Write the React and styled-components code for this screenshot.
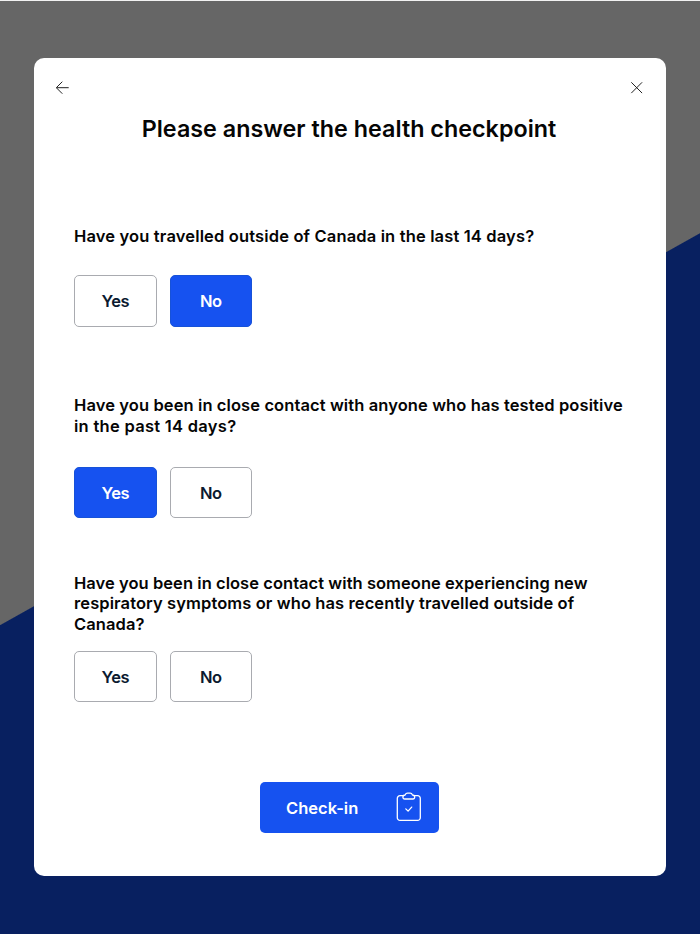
import React, { useState } from "react";
import styled, { createGlobalStyle } from "styled-components";

const GlobalStyle = createGlobalStyle`
    body {
        margin: 0;
    }

    *,
    *::before {
        box-sizing: border-box;
    }
`;

const Page = styled.div`
    height: 934px;
    width: 700px;
    overflow: hidden;
    padding: 57px 34px 0;
    border-top: 1px solid #f2f2f2;
    background: linear-gradient(150.75deg, #666 545px, #082060 546px) 0 -1px / 700px 934px no-repeat;
    font-family: "Inter", "Liberation Sans", sans-serif;
`;

const Card = styled.main`
    display: flex;
    flex-direction: column;
    width: 632px;
    height: 818px;
    padding: 22px 22px 0;
    border-radius: 10px;
    background-color: #fff;
    color: #050505;
`;

const TopBar = styled.header`
    display: flex;
    justify-content: space-between;
`;

const IconButton = styled.button`
    display: flex;
    padding: 0;
    border: none;
    background: none;
    cursor: pointer;
`;

const Title = styled.h1`
    margin: 17px 0 0;
    padding-right: 2px;
    font-size: 23.3px;
    font-weight: 600;
    line-height: 32px;
    letter-spacing: 0.02px;
    text-align: center;
    white-space: nowrap;
`;

const Questions = styled.div`
    padding: 81px 0 0 18px;
`;

const Question = styled.section`
    height: ${(props) => props.$height}px;
`;

const Prompt = styled.h2`
    margin: 0;
    height: ${(props) => props.$height}px;
    font-size: 16.5px;
    font-weight: 600;
    line-height: 20.5px;
`;

const Line = styled.span`
    display: block;
    white-space: nowrap;
    letter-spacing: ${(props) => props.$spacing || 0}px;
`;

const Answers = styled.div`
    display: flex;
    gap: 13px;
`;

const Answer = styled.button`
    width: 82.5px;
    height: 51.5px;
    padding: 1px 0 0;
    border: 1px solid ${(props) => (props.$selected ? "#1752d8" : "#a9abb0")};
    border-radius: 5px;
    background-color: ${(props) => (props.$selected ? "#1652f0" : "#fff")};
    color: ${(props) => (props.$selected ? "#fff" : "#0b1a30")};
    font: 600 16.5px "Inter", "Liberation Sans", sans-serif;
    letter-spacing: -0.5px;
    cursor: pointer;
`;

const CheckIn = styled.button`
    display: flex;
    align-items: center;
    justify-content: space-between;
    align-self: center;
    width: 179px;
    height: 51px;
    margin-right: 1px;
    padding: 0 17px 0 26px;
    border: none;
    border-radius: 5px;
    background-color: #1652f0;
    color: #fff;
    font: 600 16.5px "Inter", "Liberation Sans", sans-serif;
    cursor: pointer;
`;

const Label = styled.span`
    padding-top: 2px;
`;

const ArrowIcon = () => (
    <svg width="14" height="16" viewBox="0 0 14 16" fill="none" stroke="#222" strokeWidth="1">
        <path d="M12.700 7.700H.500M6.300 1.700l-6 6 6 6" />
    </svg>
);

const CloseIcon = () => (
    <svg width="14" height="16" viewBox="0 0 14 16" fill="none" stroke="#222" strokeWidth="1">
        <path d="M1.300 2.300l10.800 10.800M12.100 2.300L1.300 13.100" />
    </svg>
);

const ClipboardIcon = () => (
    <svg width="26" height="30" viewBox="0 0 26 30" fill="none" stroke="#fff" strokeWidth="1.3" strokeLinecap="round" strokeLinejoin="round">
        <path d="M7 3.700H4a2.700 2.700 0 0 0-2.700 2.700v19.300a2.700 2.700 0 0 0 2.700 2.700h17.600a2.700 2.700 0 0 0 2.700-2.700V6.400a2.700 2.700 0 0 0-2.700-2.700h-3" />
        <path d="M8.700 7h8.200c1.100 0 1.800-.8 1.800-1.900 0-1.300-.9-2-2.200-2.100C16 1.800 15.200 1.200 14.100 1.200h-2.600c-1.100 0-1.900.6-2.400 1.800-1.300.1-2.200.8-2.200 2.100C6.900 6.200 7.600 7 8.700 7z" />
        <path d="M9.800 16.900l2.300 2.200 3.600-4" />
    </svg>
);

const questions = [
    {
        id: "travel",
        height: 169,
        promptHeight: 49,
        lines: [["Have you travelled outside of Canada in the last 14 days?", 0.15]],
    },
    {
        id: "contact",
        height: 177.5,
        promptHeight: 71.5,
        lines: [
            ["Have you been in close contact with anyone who has tested positive", 0.1],
            ["in the past 14 days?", 0.28],
        ],
    },
    {
        id: "symptoms",
        height: 209,
        promptHeight: 78,
        lines: [
            ["Have you been in close contact with someone experiencing new", 0.05],
            ["respiratory symptoms or who has recently travelled outside of", 0.1],
            ["Canada?", 0.1],
        ],
    },
];

const App = () => {
    const [answers, setAnswers] = useState({ travel: "No", contact: "Yes" });

    return (
        <>
            <GlobalStyle />
            <Page>
                <Card>
                    <TopBar>
                        <IconButton aria-label="Back">
                            <ArrowIcon />
                        </IconButton>
                        <IconButton aria-label="Close">
                            <CloseIcon />
                        </IconButton>
                    </TopBar>
                    <Title>Please answer the health checkpoint</Title>
                    <Questions>
                        {questions.map((question) => (
                            <Question key={question.id} $height={question.height}>
                                <Prompt $height={question.promptHeight}>
                                    {question.lines.map(([text, spacing]) => (
                                        <Line key={text} $spacing={spacing}>
                                            {text}
                                        </Line>
                                    ))}
                                </Prompt>
                                <Answers>
                                    {["Yes", "No"].map((option) => (
                                        <Answer
                                            key={option}
                                            $selected={answers[question.id] === option}
                                            onClick={() => setAnswers({ ...answers, [question.id]: option })}
                                        >
                                            {option}
                                        </Answer>
                                    ))}
                                </Answers>
                            </Question>
                        ))}
                    </Questions>
                    <CheckIn>
                        <Label>Check-in</Label>
                        <ClipboardIcon />
                    </CheckIn>
                </Card>
            </Page>
        </>
    );
};

export default App;
